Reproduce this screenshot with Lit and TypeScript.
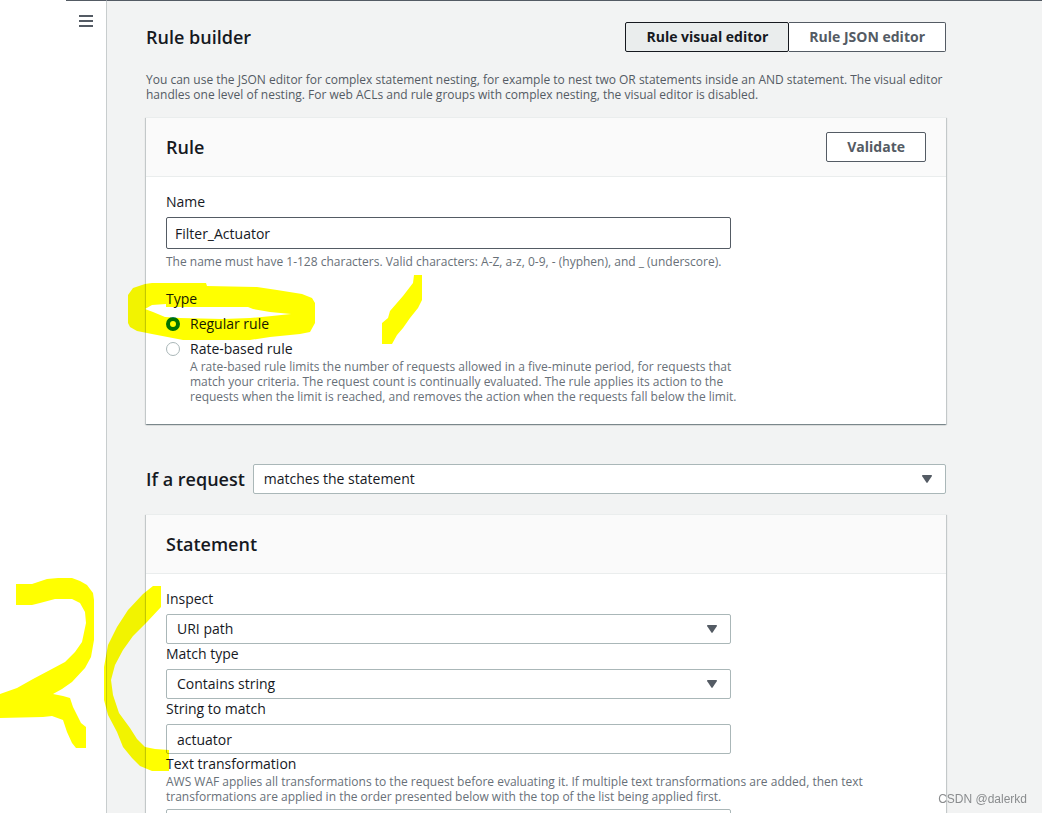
import { LitElement, html, css, svg } from "lit";
import { customElement, property, state } from "lit/decorators.js";

const STROKES = [
  // ring around the rule type
  "M128 295L133 288L145 284L152 283H206L207 286L257 287L277 290L302 294L312 298L315 303V323L310 332L300 334L270 337L250 340H183L152 334L137 331L130 327L128 323Z M145 309L153 312L165 317L180 318L223 319L250 318L272 316L291 314L270 312L253 309L248 307H166V304L152 305Z",
  // "1"
  "M414 275H422V300L418 308L410 318L403 328L397 335L392 344H382V323L388 318L390 311L403 296L413 283Z",
  // "2"
  "M16 584H32L47 579L58 578H72L80 581L87 585L93 593L94 600V640L91 657L85 668L72 682L62 689L53 694L63 696L70 698L73 707L81 723L86 727V748H76L72 743L67 732L63 720L52 716L43 717L0 718V694L17 688L33 679L50 670L65 662L75 652L82 642L86 623L85 612L80 603L72 599H55L40 603L32 605H16Z",
  // opening bracket beside the statement
  "M153 586H161V607L147 622L133 636L123 650L115 665L111 680L113 695L119 713L130 728L137 739L145 747L155 749L169 750V771H152L140 766L132 758L123 747L117 732L108 715L104 700V667L108 645L117 627L128 610L143 594Z",
];

@customElement("waf-select")
export class WafSelect extends LitElement {
  @property() label = "";
  @property({ type: Boolean }) hideLabel = false;
  @property({ type: Array }) options: string[] = [];

  static styles = css`
    :host {
      display: block;
    }
    .label {
      display: block;
      line-height: 20px;
      margin-bottom: 5px;
    }
    .box {
      display: grid;
      align-items: center;
    }
    .control,
    .arrow {
      grid-area: 1 / 1;
    }
    .control {
      appearance: none;
      box-sizing: border-box;
      width: 100%;
      height: 30px;
      margin: 0;
      padding: 0 34px 0 10px;
      border: 1px solid #aab7b8;
      border-radius: 2px;
      background: #fff;
      color: #16191f;
      font: inherit;
    }
    .arrow {
      justify-self: end;
      margin-right: 14px;
      fill: #545b64;
      pointer-events: none;
    }
  `;

  render() {
    return html`
      ${this.hideLabel
        ? null
        : html`<label class="label" for="control">${this.label}</label>`}
      <div class="box">
        <select
          id="control"
          class="control"
          aria-label=${this.label}
        >
          ${this.options.map((o) => html`<option>${o}</option>`)}
        </select>
        <svg class="arrow" width="10" height="8" viewBox="0 0 10 8" aria-hidden="true">
          <path d="M0.6 0H9.4Q10.2 0.5 9.8 1.2L5.6 7.6Q5 8.2 4.4 7.6L0.2 1.2Q-0.2 0.5 0.6 0Z"></path>
        </svg>
      </div>
    `;
  }
}

@customElement("waf-panel")
export class WafPanel extends LitElement {
  @property() heading = "";

  static styles = css`
    :host {
      display: block;
      background: #fff;
      border-top: 1px solid #eaeded;
      box-shadow: 0 1px 1px 0 rgba(0, 28, 36, 0.3),
        1px 1px 1px 0 rgba(0, 28, 36, 0.15),
        -1px 1px 1px 0 rgba(0, 28, 36, 0.15);
    }
    .header {
      display: flex;
      align-items: center;
      justify-content: space-between;
      min-height: 58px;
      padding: 0 20px;
      background: #fafafa;
      border-bottom: 1px solid #eaeded;
    }
    .title {
      margin: 0;
      font-size: 18px;
      line-height: 22px;
      font-weight: 600;
    }
    .body {
      padding: 15px 20px 20px;
    }
  `;

  render() {
    return html`
      <div class="header">
        <h2 class="title">${this.heading}</h2>
        <slot name="actions"></slot>
      </div>
      <div class="body"><slot></slot></div>
    `;
  }
}

@customElement("app-root")
export class AppRoot extends LitElement {
  @state() private editor = "visual";
  @state() private type = "regular";

  static styles = css`
    :host {
      display: block;
      position: relative;
      height: 100vh;
      overflow: hidden;
      background: #fff;
      color: #16191f;
      font: 14px/20px "Open Sans", "Noto Sans", sans-serif;
    }
    .layout {
      display: grid;
      grid-template-columns: 106px minmax(0, 1fr);
      height: 100%;
    }
    .nav {
      display: flex;
      justify-content: flex-end;
      align-items: flex-start;
    }
    .rail {
      display: flex;
      justify-content: center;
      width: 40px;
      padding-top: 14px;
      border-top: 1px solid #545b64;
    }
    .menu {
      display: block;
      padding: 0;
      border: 0;
      background: none;
      line-height: 0;
      color: #545b64;
    }
    .main {
      overflow-y: auto;
      scrollbar-width: none;
      padding: 21px 96px 0 39px;
      border-top: 1px solid #545b64;
      border-left: 1px solid #c8cdce;
      background: #f2f3f3;
    }
    .top {
      display: flex;
      justify-content: space-between;
      align-items: center;
    }
    .title {
      margin: 0;
      font-size: 18px;
      line-height: 22px;
      font-weight: 600;
      white-space: nowrap;
    }
    .segments {
      display: flex;
    }
    .button {
      height: 30px;
      padding: 0 20px;
      border: 1px solid #545b64;
      border-radius: 2px;
      background: #fff;
      color: #545b64;
      font: inherit;
      font-weight: 700;
    }
    .segment + .segment {
      border-left: 0;
      border-radius: 0 2px 2px 0;
    }
    .segment[aria-pressed="true"] {
      border-color: #16191f;
      background: #eaeded;
      color: #16191f;
    }
    .hint {
      margin: 0;
      font-size: 12px;
      line-height: 15px;
      color: #687078;
    }
    .intro {
      margin: 20px 0 15px;
      color: #545b64;
    }
    .field {
      width: 565px;
      max-width: 100%;
    }
    .label {
      display: block;
      padding: 0;
      margin-bottom: 5px;
    }
    .text {
      display: block;
      box-sizing: border-box;
      width: 100%;
      height: 30px;
      margin: 0;
      padding: 0 10px;
      border: 1px solid #aab7b8;
      border-radius: 2px;
      background: #fff;
      color: #16191f;
      font: inherit;
    }
    .name {
      height: 32px;
      margin-bottom: 5px;
      padding: 0 8px;
      border-color: #545b64;
    }
    .types {
      max-width: 580px;
      margin: 20px 0 0;
      padding: 0;
      border: 0;
      min-width: 0;
    }
    .option {
      display: grid;
      grid-template-columns: 14px minmax(0, 1fr);
      column-gap: 10px;
      align-items: center;
    }
    .option + .option {
      margin-top: 5px;
    }
    .option .hint {
      grid-column: 2;
    }
    .radio {
      appearance: none;
      width: 14px;
      height: 14px;
      margin: 0;
      box-sizing: border-box;
      border: 1px solid #aab7b8;
      border-radius: 50%;
      background: #fff;
    }
    .radio:checked {
      border: 4px solid #0073bb;
    }
    .condition {
      display: flex;
      align-items: center;
      gap: 8px;
      margin: 40px 0 20px;
    }
    .condition waf-select {
      flex: 1;
    }
    .transform {
      margin-bottom: 5px;
    }
    .transform .label {
      margin: 0;
    }
    .transform .hint {
      max-width: 720px;
    }
    .marker {
      position: absolute;
      left: 0;
      top: 0;
      mix-blend-mode: multiply;
      pointer-events: none;
      fill: #ff0;
      fill-rule: evenodd;
    }
    .watermark {
      position: absolute;
      right: 15px;
      bottom: 5px;
      font: 12px/18px "Liberation Sans", sans-serif;
      color: #8a8c8e;
    }
  `;

  private segment(id: string, text: string) {
    return html`<button
      class="button segment"
      aria-pressed=${this.editor === id ? "true" : "false"}
      @click=${() => (this.editor = id)}
    >${text}</button>`;
  }

  private radio(id: string, text: string, hint = "") {
    return html`<div class="option">
      <input
        class="radio"
        type="radio"
        name="type"
        id=${id}
        .checked=${this.type === id}
        @change=${() => (this.type = id)}
      />
      <label for=${id}>${text}</label>
      ${hint ? html`<p class="hint">${hint}</p>` : null}
    </div>`;
  }

  render() {
    return html`
      <div class="layout">
        <nav class="nav">
          <div class="rail">
            <button class="menu" aria-label="Open navigation">
              <svg width="14" height="12" viewBox="0 0 14 12" fill="currentColor">
                <path d="M0 0H14V2H0ZM0 5H14V7H0ZM0 10H14V12H0Z"></path>
              </svg>
            </button>
          </div>
        </nav>
        <main class="main">
          <div class="top">
            <h1 class="title">Rule builder</h1>
            <div class="segments">
              ${this.segment("visual", "Rule visual editor")}
              ${this.segment("json", "Rule JSON editor")}
            </div>
          </div>
          <p class="hint intro">
            You can use the JSON editor for complex statement nesting, for
            example to nest two OR statements inside an AND statement. The
            visual editor handles one level of nesting. For web ACLs and rule
            groups with complex nesting, the visual editor is disabled.
          </p>

          <waf-panel heading="Rule">
            <button class="button" slot="actions">Validate</button>
            <div class="field">
              <label class="label" for="name">Name</label>
              <input class="text name" id="name" value="Filter_Actuator" aria-describedby="name-hint" />
              <p class="hint" id="name-hint">
                The name must have 1-128 characters. Valid characters: A-Z, a-z,
                0-9, - (hyphen), and _ (underscore).
              </p>
            </div>
            <fieldset class="types">
              <legend class="label">Type</legend>
              ${this.radio("regular", "Regular rule")}
              ${this.radio(
                "rate",
                "Rate-based rule",
                "A rate-based rule limits the number of requests allowed in a five-minute period, for requests that match your criteria. The request count is continually evaluated. The rule applies its action to the requests when the limit is reached, and removes the action when the requests fall below the limit."
              )}
            </fieldset>
          </waf-panel>

          <div class="condition">
            <h2 class="title">If a request</h2>
            <waf-select label="If a request" hideLabel .options=${["matches the statement"]}></waf-select>
          </div>

          <waf-panel heading="Statement">
            <waf-select class="field" label="Inspect" .options=${["URI path"]}></waf-select>
            <waf-select class="field" label="Match type" .options=${["Contains string"]}></waf-select>
            <div class="field">
              <label class="label" for="match">String to match</label>
              <input class="text" id="match" value="actuator" />
            </div>
            <div class="transform">
              <span class="label">Text transformation</span>
              <p class="hint">
                AWS WAF applies all transformations to the request before
                evaluating it. If multiple text transformations are added, then
                text transformations are applied in the order presented below
                with the top of the list being applied first.
              </p>
            </div>
            <waf-select class="field" label="Text transformation" hideLabel></waf-select>
          </waf-panel>
        </main>
      </div>
      <svg class="marker" width="1042" height="813" viewBox="0 0 1042 813" aria-hidden="true">
        ${STROKES.map((d) => svg`<path d=${d}></path>`)}
      </svg>
      <span class="watermark">CSDN @dalerkd</span>
    `;
  }
}
